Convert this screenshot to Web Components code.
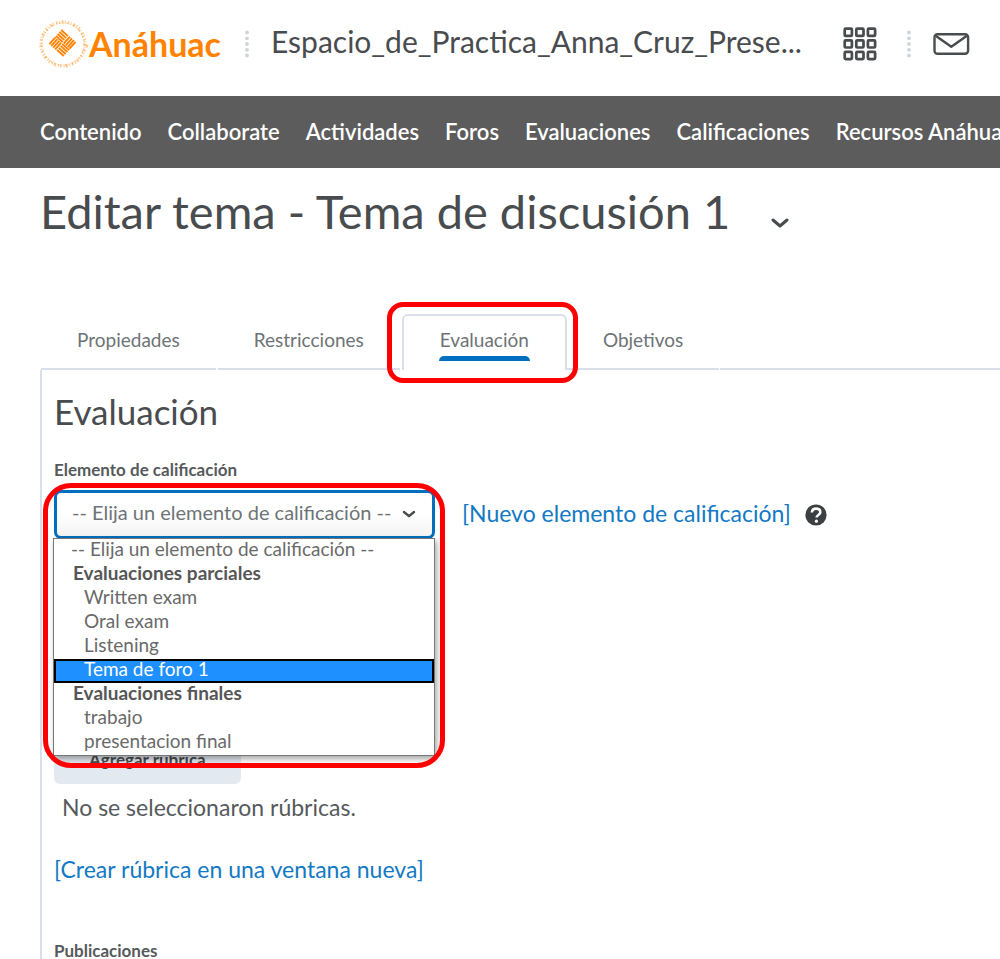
<!DOCTYPE html>
<html lang="es">
<head>
<meta charset="utf-8">
<meta name="viewport" content="width=device-width, initial-scale=1">
<title>Editar tema - Tema de discusión 1</title>
<style>
  body { margin: 0; background: #fff; color: #494c4e; font-family: Lato, "Liberation Sans", sans-serif; }
</style>
</head>
<body>
<edit-topic-page></edit-topic-page>

<script>
const define = (name, html) => {
  const template = document.createElement('template');
  template.innerHTML = html;
  customElements.define(name, class extends HTMLElement {
    constructor() {
      super();
      this.attachShadow({ mode: 'open' }).append(template.content.cloneNode(true));
    }
  });
};

define('dot-divider', `
  <style>
    :host { display: block; flex: none; width: 4px; height: 28px; }
    svg { display: block; }
  </style>
  <svg width="4" height="28" fill="#cdd5dc" aria-hidden="true">
    <circle cx="2" cy="2.5" r="1.9"/><circle cx="2" cy="8.3" r="1.9"/><circle cx="2" cy="14" r="1.9"/><circle cx="2" cy="19.8" r="1.9"/><circle cx="2" cy="25.5" r="1.9"/>
  </svg>`);

/* University seal: ring of lettering around a woven diamond, then the wordmark */
define('brand-logo', `
  <style>
    :host { display: block; flex: none; }
    a { display: flex; align-items: center; color: #ff8300; text-decoration: none; }
    svg { display: block; flex: none; }
    span { font: 700 34px/48px Lato, sans-serif; }
  </style>
  <a href="#" aria-label="Anáhuac">
    <svg width="50" height="50" viewBox="0 0 50 50" fill="none" stroke="#ff8300">
      <circle cx="24" cy="25" r="22" stroke-width="3.4" stroke-opacity=".42" stroke-dasharray="1.4 1.5 .7 1.9 2 1.3 1 2.200"/>
      <circle cx="24" cy="25" r="21.200" stroke-width="1.2" stroke-opacity=".45" stroke-dasharray="2 2.600 1 1.7"/>
      <g transform="translate(23.5 24) rotate(42)" stroke-width="1.9">
        <path d="M-9.7-8.800h9.200M-9.7-6.100h9.200M-9.7-3.400h9.200M-9.7-.8h9.200M.5.8h9.200M.5 3.400h9.200M.5 6.100h9.200M.5 8.800h9.200"/>
        <path d="M1.3-9.700v9.200M4-9.700v9.200M6.600-9.700v9.200M9-9.700v9.200M-9 .5v9.200M-6.400.5v9.200M-3.800.5v9.200M-1.200.5v9.200"/>
      </g>
      <circle cx="48" cy="27" r="1" stroke-width=".5"/>
    </svg>
    <span>Anáhuac</span>
  </a>`);

define('top-bar', `
  <style>
    :host { display: flex; align-items: center; box-sizing: border-box; height: 96px; padding: 0 30px 8px 39px; }
    dot-divider { margin-left: 24px; }
    .course { flex: 1; min-width: 0; margin: 0 0 6px 22px; overflow: hidden; white-space: nowrap; font-size: 30px; line-height: 40px; color: #494c4e; text-decoration: none; }
    button { flex: none; padding: 0; border: 0; background: none; color: #494c4e; }
    svg { display: block; }
    .grid { margin-right: 6px; }
    .mail { margin-left: 22px; }
  </style>
  <brand-logo></brand-logo>
  <dot-divider></dot-divider>
  <a class="course" href="#">Espacio_de_Practica_Anna_Cruz_Prese...</a>
  <button class="grid" aria-label="Seleccionar un curso">
    <svg width="34" height="34" viewBox="0 0 34 34" fill="none" stroke="currentColor" stroke-width="2.700">
      <rect x="1.700" y="1.700" width="7.200" height="7.200" rx="1"/><rect x="13.300" y="1.700" width="7.200" height="7.200" rx="1"/><rect x="24.900" y="1.700" width="7.200" height="7.200" rx="1"/>
      <rect x="1.700" y="13.300" width="7.200" height="7.200" rx="1"/><rect x="13.300" y="13.300" width="7.200" height="7.200" rx="1"/><rect x="24.900" y="13.300" width="7.200" height="7.200" rx="1"/>
      <rect x="1.700" y="24.900" width="7.200" height="7.200" rx="1"/><rect x="13.300" y="24.900" width="7.200" height="7.200" rx="1"/><rect x="24.900" y="24.900" width="7.200" height="7.200" rx="1"/>
    </svg>
  </button>
  <dot-divider></dot-divider>
  <button class="mail" aria-label="Mensajes">
    <svg width="37" height="22" viewBox="0 0 37 22" fill="none" stroke="currentColor" stroke-width="2.400">
      <rect x="1.500" y="1.200" width="33.600" height="19.600" rx="3"/>
      <path d="M3 3l15.300 10.800L33.600 3" stroke-linejoin="round"/>
    </svg>
  </button>`);

define('course-nav', `
  <style>
    :host { display: block; background: #5c5c5c; }
    nav { display: flex; gap: 26px; box-sizing: border-box; height: 72px; padding-left: 40px; align-items: center; overflow: hidden; }
    a { flex: none; color: #fff; font-size: 22px; line-height: 28px; font-weight: 600; text-decoration: none; white-space: nowrap; }
  </style>
  <nav>
    <a href="#">Contenido</a><a href="#">Collaborate</a><a href="#">Actividades</a><a href="#">Foros</a><a href="#">Evaluaciones</a><a href="#">Calificaciones</a><a href="#">Recursos Anáhuac</a>
  </nav>`);

/* Red outline that surrounds its slotted content */
define('call-out', `
  <style>
    :host { display: block; position: relative; }
    i { position: absolute; inset: var(--out); border: 5px solid #f00; border-radius: var(--round, 16px); pointer-events: none; z-index: 3; }
  </style>
  <slot></slot><i></i>`);

define('page-title', `
  <style>
    :host { display: flex; align-items: center; padding: 15px 40px 0; }
    h1 { margin: 0; font-size: 47px; line-height: 56px; font-weight: 400; }
    button { padding: 24px 0 0; margin-left: 41px; border: 0; background: none; color: #494c4e; }
    svg { display: block; }
  </style>
  <h1><slot></slot></h1>
  <button aria-label="Acciones"><svg width="18" height="12" viewBox="0 0 18 12" fill="none" stroke="currentColor" stroke-width="3" stroke-linecap="round" stroke-linejoin="round"><path d="M2 3l7 6 7-6"/></svg></button>`);

define('tab-strip', `
  <style>
    :host { display: flex; padding-left: 41px; margin-top: 75px; }
    button { display: block; box-sizing: border-box; height: 56px; padding: 0 36px 2px; border: 0; border-bottom: 2px solid #d9dfe8; background: none; color: #6e7376; font: 400 19px/40px Lato, sans-serif; white-space: nowrap; }
    .gap { margin-left: 2px; }
    .on { padding: 0 36px 6px; border: 2px solid #d9dfe8; border-bottom: 0; border-radius: 6px 6px 0 0; }
    .on span { display: block; position: relative; margin: 0 -1px; padding: 0 1px; }
    .on span::after { content: ""; position: absolute; left: 0; right: 0; bottom: -1px; height: 5px; border-radius: 5px 5px 0 0; background: #006fbf; }
    call-out { --out: -12px -11px -13px -15px; }
    .rest { flex: 1; margin-left: 1px; border-bottom: 2px solid #d9dfe8; }
  </style>
  <button>Propiedades</button>
  <button class="gap">Restricciones</button>
  <call-out class="gap"><button class="on"><span>Evaluación</span></button></call-out>
  <button>Objetivos</button>
  <div class="rest"></div>`);

define('grade-picker', `
  <style>
    :host { display: block; width: 381px; }
    .field { position: relative; }
    select { display: block; appearance: none; box-sizing: border-box; width: 100%; height: 49px; padding: 0 40px 5px 15px; border: 3px solid #006fbf; border-radius: 7px; background: linear-gradient(#fff 50%, #f3f3f3); color: #6e7376; font: 400 20px/28px Lato, sans-serif; outline: 0; }
    svg { position: absolute; right: 19px; top: 19px; }
    ul { position: absolute; z-index: 2; left: -1px; right: 0; top: 48px; margin: 0; padding: 0; list-style: none; border: 1px solid #777; background: #fff; box-shadow: 2px 3px 6px rgba(0,0,0,.35); font-size: 19px; line-height: 20px; color: #6a6a6a; }
    li { box-sizing: border-box; height: 24px; padding: 0 30px; }
    .first { padding-left: 17px; }
    .group { padding-left: 19px; font-weight: 700; color: #565656; }
    .active { padding-left: 28px; border: 2px solid #000; background: #1e90ff; color: #fff; line-height: 16px; }
    call-out { --out: -7px -10px -229px -11px; --round: 28px; }
  </style>
  <call-out>
    <div class="field">
      <select id="grade" aria-label="Elemento de calificación">
        <option>-- Elija un elemento de calificación --</option>
      </select>
      <svg width="14" height="10" viewBox="0 0 14 10" fill="none" stroke="#494c4e" stroke-width="2.400" stroke-linecap="round" stroke-linejoin="round" aria-hidden="true"><path d="M2 3l5 4.200L12 3"/></svg>
      <ul role="listbox" aria-label="Elemento de calificación">
        <li role="option" class="first">-- Elija un elemento de calificación --</li>
        <li role="presentation" class="group">Evaluaciones parciales</li>
        <li role="option">Written exam</li>
        <li role="option">Oral exam</li>
        <li role="option">Listening</li>
        <li role="option" aria-selected="true" class="active">Tema de foro 1</li>
        <li role="presentation" class="group">Evaluaciones finales</li>
        <li role="option">trabajo</li>
        <li role="option">presentacion final</li>
      </ul>
    </div>
  </call-out>`);

define('assessment-panel', `
  <style>
    :host { display: block; margin-left: 40px; padding: 19px 12px 0; border-left: 2px solid #d9dfe8; }
    h2 { margin: 0; font-size: 35px; line-height: 44px; font-weight: 400; }
    h3 { margin: 0; font-size: 17px; line-height: 24px; font-weight: 700; color: #565a5c; }
    h2 + h3 { margin: 25px 0 8px; }
    .row { display: flex; align-items: center; }
    a { color: #1279c4; font-size: 23px; line-height: 28px; text-decoration: none; }
    .row a { margin: 0 14px 4px 27px; }
    button { border: 0; padding: 0; background: none; }
    svg { display: block; }
    .add { display: block; height: 48px; margin-top: 197px; padding: 0 35px; border-radius: 6px; background: #e3e9f1; color: #494c4e; font: 700 17px/48px Lato, sans-serif; }
    p { margin: 9px 0 34px 8px; font-size: 23px; line-height: 28px; color: #565a5c; }
    a + h3 { margin-top: 56px; }
  </style>
  <h2>Evaluación</h2>
  <h3>Elemento de calificación</h3>
  <div class="row">
    <grade-picker></grade-picker>
    <a href="#">[Nuevo elemento de calificación]</a>
    <button aria-label="Ayuda">
      <svg width="22" height="22" viewBox="0 0 22 22"><circle cx="11" cy="11" r="10.600" fill="#3c3f41"/><path d="M6.800 8.500C7 5.900 8.600 4.600 11 4.600c2.500 0 4.300 1.400 4.300 3.600 0 2.900-3.700 2.700-3.700 5.400" fill="none" stroke="#fff" stroke-width="2.600"/><circle cx="11.400" cy="17.200" r="1.600" fill="#fff"/></svg>
    </button>
  </div>
  <button class="add">Agregar rúbrica</button>
  <p>No se seleccionaron rúbricas.</p>
  <a href="#">[Crear rúbrica en una ventana nueva]</a>
  <h3>Publicaciones</h3>`);

define('edit-topic-page', `
  <style>:host { display: block; overflow: hidden; min-height: 100vh; }</style>
  <header><top-bar></top-bar><course-nav></course-nav></header>
  <main>
    <page-title>Editar tema - Tema de discusión 1</page-title>
    <tab-strip></tab-strip>
    <assessment-panel></assessment-panel>
  </main>`);
</script>
</body>
</html>
